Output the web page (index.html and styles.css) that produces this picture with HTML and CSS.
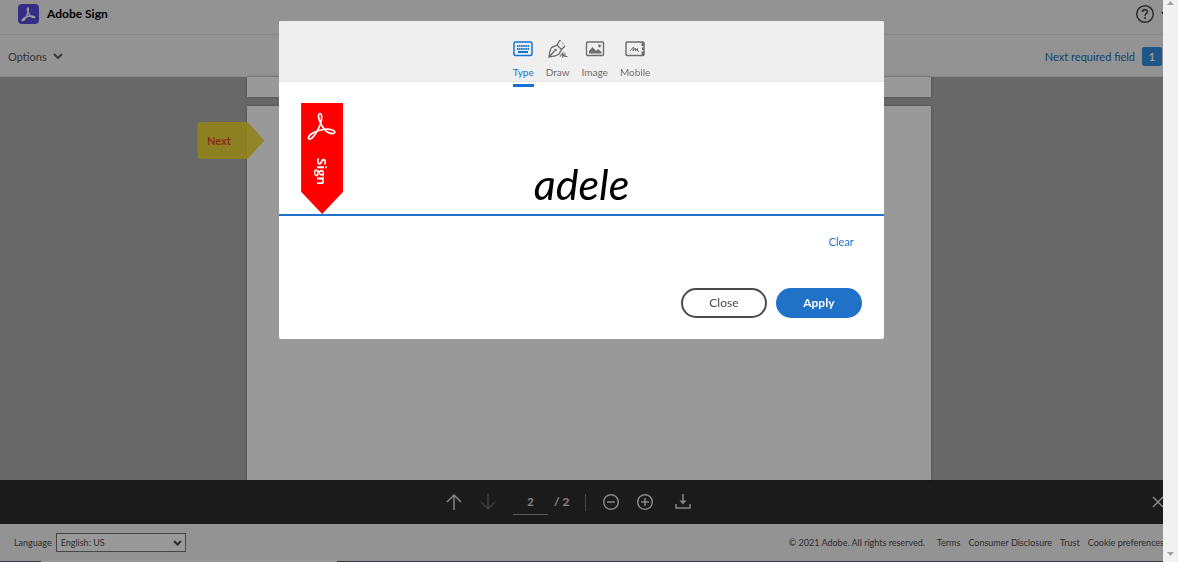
FILE: index.html
```html
<!DOCTYPE html>
<html lang="en">
<head>
    <meta charset="UTF-8">
    <meta name="viewport" content="width=device-width, initial-scale=1.0">
    <title>Adobe Sign</title>
    <link rel="stylesheet" href="styles.css">
</head>
<body>

<div class="app">
    <header class="header">
        <svg class="logo" viewBox="0 0 21 20">
            <rect width="21" height="20" rx="4" fill="#5a4be0"/>
            <path d="M10 4c-1.500 0 0 4 1 6 1.500 2.500 4 4 5.500 3.500 1.500-1.500-5-2-8-.5-3 1-5 3-4 3.500 1.500.5 4-4 5-6.500.8-2.500 1.200-5.800.5-6z" fill="none" stroke="#fff" stroke-width="1.400"/>
        </svg>
        <h1>Adobe Sign</h1>
        <button class="help" aria-label="Help">
            <svg width="20" height="20" viewBox="0 0 20 20">
                <circle cx="10" cy="10" r="8.300" fill="none" stroke="currentColor" stroke-width="1.500"/>
                <path d="M7.500 8c0-3.200 5-3 5-.3 0 1.700-2.400 1.800-2.400 4" fill="none" stroke="currentColor" stroke-width="1.700"/>
                <circle cx="10" cy="14" r="1.100" fill="currentColor"/>
            </svg>
            <svg width="6" height="4" viewBox="0 0 6 4"><path d="M0 0h6L3 4z" fill="currentColor"/></svg>
        </button>
    </header>

    <nav class="options-bar">
        <button class="options">Options
            <svg width="10" height="7" viewBox="0 0 10 7"><path d="M1 1l4 4 4-4" fill="none" stroke="currentColor" stroke-width="1.800"/></svg>
        </button>
        <a class="next-required" href="#field">Next required field <span class="count">1</span></a>
    </nav>

    <main class="workspace">
        <div class="sheet sheet-end"></div>
        <div class="sheet sheet-current" id="field">
            <button class="next-tag">Next</button>
        </div>
    </main>

    <div class="page-bar">
        <div class="page-tools">
            <button aria-label="Previous page">
                <svg width="18" height="18" viewBox="0 0 18 18"><path d="M9 17V2M2 9l7-7 7 7"/></svg>
            </button>
            <button aria-label="Next page" disabled>
                <svg width="18" height="18" viewBox="0 0 18 18"><path d="M9 1v15M2 9l7 7 7-7"/></svg>
            </button>
            <input class="page-number" type="text" value="2" aria-label="Page number">
            <span class="page-total">/ 2</span>
            <span class="divider"></span>
            <button aria-label="Zoom out">
                <svg width="18" height="18" viewBox="0 0 18 18"><circle cx="9" cy="9" r="7.300"/><path d="M5 9h8"/></svg>
            </button>
            <button aria-label="Zoom in">
                <svg width="18" height="18" viewBox="0 0 18 18"><circle cx="9" cy="9" r="7.300"/><path d="M5 9h8M9 5v8"/></svg>
            </button>
            <button class="download" aria-label="Download">
                <svg width="18" height="18" viewBox="0 0 18 18"><path d="M9 1v9M2 11v4h14v-4"/><path class="fill" d="M5.500 7.500h7L9 11.500z"/></svg>
            </button>
        </div>
        <button class="hide-bar" aria-label="Hide toolbar">
            <svg width="12" height="12" viewBox="0 0 12 12"><path d="M1 1l10 10M11 1L1 11"/></svg>
        </button>
    </div>

    <footer class="footer">
        <label for="language">Language</label>
        <span class="select-wrap">
            <select id="language">
                <option>English: US</option>
            </select>
            <svg class="select-arrow" width="9" height="6" viewBox="0 0 9 6"><path d="M1 1l3.500 3.500L8 1" fill="none" stroke="currentColor" stroke-width="2"/></svg>
        </span>
        <span class="copyright">© 2021 Adobe. All rights reserved.</span>
        <a href="#">Terms</a>
        <a href="#">Consumer Disclosure</a>
        <a href="#">Trust</a>
        <a href="#">Cookie preferences</a>
    </footer>
    <div class="edge"><span></span></div>
</div>

<div class="backdrop">
    <form class="dialog" role="dialog" aria-label="Signature">
        <div class="tabs">
            <button type="button" class="tab active">
                <svg width="20" height="16" viewBox="0 0 20 16">
                    <rect x="1" y="1" width="18" height="13.500" rx="1.500" fill="none" stroke="currentColor" stroke-width="1.500"/>
                    <path d="M4 5h12M4 8h12" fill="none" stroke="currentColor" stroke-width="1.800" stroke-dasharray="1.500 .6"/>
                    <path d="M5 11h10" stroke="currentColor" stroke-width="1.800"/>
                </svg>
                Type
            </button>
            <button type="button" class="tab">
                <svg width="20" height="20" viewBox="0 0 20 20">
                    <path d="M1 18C1.500 14 2 11 3.500 8.500L9 6l4.500 4.500-2.500 4.500c-2.500 2-6 2.500-10 3zM1.500 17.500l5-5.500M9 6l3-5M13.500 10.500l3.500-3.500" fill="none" stroke="currentColor" stroke-width="1.400"/>
                    <path d="M12 1l5 6" fill="none" stroke="currentColor" stroke-width="1" stroke-dasharray="1 1"/>
                    <circle cx="7.500" cy="11" r="1.300" fill="currentColor"/>
                    <path d="M12 17.500l2.800-3.500-.2 3.500 2.300-2.500v2.500h2.600" fill="none" stroke="currentColor" stroke-width="1.200"/>
                </svg>
                Draw
            </button>
            <button type="button" class="tab">
                <svg width="20" height="16" viewBox="0 0 20 16">
                    <rect x="1.500" y="1" width="17" height="13.500" rx="1" fill="none" stroke="currentColor" stroke-width="1.400"/>
                    <path d="M4 12.500V10l3.500-4 3.500 4 2-2 3.500 3v1.500z" fill="currentColor"/>
                    <circle cx="14.500" cy="5" r="1.400" fill="currentColor"/>
                </svg>
                Image
            </button>
            <button type="button" class="tab">
                <svg width="20" height="16" viewBox="0 0 20 16">
                    <rect x="1" y="1" width="18" height="13.500" rx="1" fill="none" stroke="currentColor" stroke-width="1.500"/>
                    <path d="M16.500 1H19v4h-2.500zM16.500 10.500H19v4h-2.500zM17 6.500h2V9h-2z" fill="currentColor"/>
                    <path d="M5 10l3.500-4-.5 4 2.500-3v3l2-2.500V10h1.500" fill="none" stroke="currentColor" stroke-width="1"/>
                </svg>
                Mobile
            </button>
        </div>

        <div class="sign-area">
            <div class="ribbon">
                <svg width="30" height="30" viewBox="0 0 30 30">
                    <path d="M13 1.500c-3 .5-1 7 1.500 11.500 3 5.500 7.500 9 11.500 8.500 5-1-.5-5.500-9.500-4-8 1-15.500 5.500-15 9 2 3 7-4 10-10C14 11.500 16.500 2 13 1.500z" fill="none" stroke="#fff" stroke-width="1.700"/>
                </svg>
                <span>Sign</span>
            </div>
            <input class="signature" type="text" value="adele" aria-label="Type your signature">
        </div>

        <button type="button" class="clear">Clear</button>

        <div class="actions">
            <button type="button" class="btn">Close</button>
            <button type="button" class="btn primary">Apply</button>
        </div>
    </form>
</div>

<div class="scrollbar">
    <svg width="7" height="4" viewBox="0 0 7 4"><path d="M0 4h7L3.500 0z"/></svg>
    <svg width="7" height="4" viewBox="0 0 7 4"><path d="M0 0h7L3.500 4z"/></svg>
</div>

</body>
</html>
```
FILE: styles.css
```css
* {
    box-sizing: border-box;
    margin: 0;
    padding: 0;
}

body {
    font-family: Lato, "Open Sans", sans-serif;
    font-size: 11px;
    line-height: 14px;
    color: #4b4b4b;
    overflow: hidden;
}

button,
input,
select {
    font: inherit;
    color: inherit;
    background: none;
    border: none;
}

button {
    cursor: pointer;
}

a {
    color: inherit;
    text-decoration: none;
}

.app {
    display: flex;
    flex-direction: column;
    height: 100vh;
    background-color: #f5f5f5;
}

/* Header */
.header {
    display: flex;
    align-items: center;
    height: 35px;
    padding: 0 8px 6px 18px;
    border-bottom: 1px solid #e4e4e4;
}

.logo {
    width: 21px;
    height: 20px;
}

.header h1 {
    margin-left: 8px;
    font-size: 12px;
    color: #000;
}

.help {
    display: flex;
    align-items: center;
    gap: 6px;
    margin-left: auto;
    margin-right: 3px;
}

.options-bar {
    display: flex;
    align-items: center;
    justify-content: space-between;
    height: 42px;
    padding: 2px 16px 0 8px;
    border-bottom: 1px solid #e4e4e4;
}

.options {
    display: flex;
    align-items: center;
    gap: 6px;
    color: #5b5b5b;
}

.next-required {
    display: flex;
    align-items: center;
    gap: 7px;
    color: #2072bf;
}

.count {
    width: 20px;
    height: 19px;
    line-height: 19px;
    font-weight: bold;
    text-align: center;
    color: #fff;
    background-color: #3590e4;
    border-radius: 2px;
}

/* Document */
.workspace {
    flex: 1;
    min-height: 0;
    display: flex;
    flex-direction: column;
    align-items: center;
    gap: 9px;
    background-color: #adadad;
}

.sheet {
    width: 58%;
    background-color: #fff;
    box-shadow: 0 0 3px rgba(0, 0, 0, 0.3);
}

.sheet-end {
    height: 20px;
}

.sheet-current {
    position: relative;
    flex: 1;
}

.next-tag {
    position: absolute;
    left: -50px;
    top: 16px;
    width: 67px;
    height: 37px;
    padding-right: 24px;
    font-weight: bold;
    color: #e74d2b;
    background-color: rgba(241, 218, 45, 0.9);
    border-radius: 4px;
    clip-path: polygon(0 0, 75% 0, 100% 50%, 75% 100%, 0 100%);
}

/* Page toolbar */
.page-bar {
    display: flex;
    align-items: center;
    height: 44px;
    padding: 0 14px 0 calc(50% - 144px);
    color: #e0e0e0;
    background-color: #2d2d2d;
}

.page-bar svg {
    display: block;
    fill: none;
    stroke: currentColor;
    stroke-width: 1.5;
}

.page-bar .fill {
    fill: currentColor;
    stroke: none;
}

.page-tools {
    display: flex;
    align-items: center;
    gap: 16px;
}

.page-tools button:disabled {
    color: #686868;
}

.page-number {
    width: 35px;
    height: 26px;
    font-weight: bold;
    text-align: center;
    border-bottom: 1px solid #999;
}

.page-total {
    margin-left: -10px;
    font-size: 12px;
    font-weight: bold;
}

.divider {
    width: 1px;
    height: 17px;
    background-color: #777;
}

.page-tools .download {
    margin-left: 4px;
}

.hide-bar {
    margin-left: auto;
}

/* Footer */
.footer {
    display: flex;
    align-items: center;
    gap: 8px;
    height: 37px;
    padding: 0 14px;
    font-size: 9px;
    white-space: nowrap;
}

.footer label {
    margin-right: -4px;
}

.select-wrap {
    position: relative;
}

.footer select {
    display: block;
    width: 130px;
    height: 19px;
    padding-left: 4px;
    appearance: none;
    background-color: #fff;
    border: 1px solid #767676;
}

.select-arrow {
    position: absolute;
    right: 4px;
    top: 7px;
    pointer-events: none;
}

.copyright {
    margin-left: auto;
    margin-right: 4px;
}

.edge {
    height: 1px;
    padding-left: 41px;
    background-color: #4a6074;
}

.edge span {
    display: block;
    width: 26%;
    height: 1px;
    background-color: #fff;
}

/* Signature dialog */
.backdrop {
    position: fixed;
    inset: 0 15px 0 0;
    display: flex;
    justify-content: center;
    align-items: flex-start;
    padding-top: 21px;
    background-color: rgba(0, 0, 0, 0.4);
}

.dialog {
    display: flex;
    flex-direction: column;
    width: 52%;
    background-color: #fff;
    border-radius: 2px;
    overflow: hidden;
}

.tabs {
    display: flex;
    justify-content: center;
    gap: 12px;
    height: 61px;
    padding-top: 18px;
    background-color: #efefef;
    border-bottom: 1px solid #e4e4e4;
}

.tab {
    display: flex;
    flex-direction: column;
    align-items: center;
    justify-content: space-between;
    height: 48px;
    padding-bottom: 8px;
    font-size: 10px;
    color: #6e6e6e;
}

.tab svg {
    height: 20px;
}

.tab.active {
    color: #1473d0;
    padding-bottom: 5px;
    border-bottom: 3px solid #1473d0;
}

.sign-area {
    display: flex;
    align-items: flex-start;
    height: 134px;
    padding: 21px 22px 0;
    border-bottom: 2px solid #1f72c8;
}

.ribbon {
    display: flex;
    flex-direction: column;
    align-items: center;
    gap: 16px;
    width: 42px;
    height: 111px;
    padding-top: 9px;
    color: #fff;
    background-color: #f00;
    clip-path: polygon(0 0, 100% 0, 100% 80%, 50% 100%, 0 80%);
}

.ribbon span {
    font: bold 13px/16px "Open Sans", sans-serif;
    writing-mode: vertical-rl;
}

.signature {
    flex: 1;
    min-width: 0;
    height: 60px;
    margin: 51px 42px 0 0;
    font-size: 43px;
    font-style: italic;
    line-height: 60px;
    text-align: center;
    color: #000;
    outline: none;
}

.clear {
    align-self: flex-end;
    margin: 19px 30px 0 0;
    color: #1f72c8;
}

.actions {
    display: flex;
    justify-content: flex-end;
    gap: 9px;
    padding: 39px 22px 21px;
}

.btn {
    width: 86px;
    height: 30px;
    font-size: 12px;
    border: 2px solid #4b4b4b;
    border-radius: 15px;
}

.btn.primary {
    font-weight: bold;
    color: #fff;
    background-color: #1f72c8;
    border-color: #1f72c8;
}

/* Scrollbar */
.scrollbar {
    position: fixed;
    inset: 0 0 0 auto;
    display: flex;
    flex-direction: column;
    align-items: center;
    justify-content: space-between;
    width: 15px;
    padding: 1px 0 6px;
    background-color: #f1f1f1;
}

.scrollbar svg {
    fill: #a3a3a3;
}
```
